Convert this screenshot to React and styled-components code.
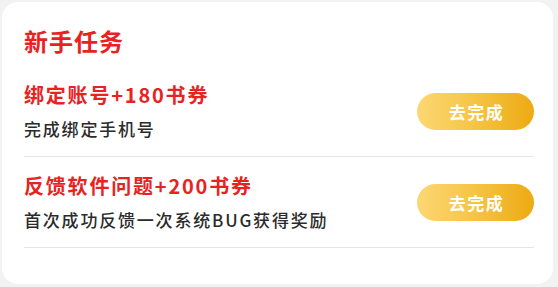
import React from 'react';
import styled, { createGlobalStyle } from 'styled-components';

const GlobalStyle = createGlobalStyle`
  html, body {
    margin: 0;
    padding: 0;
    background: #f2f2f2;
  }
  body {
    font-family: "Noto Sans CJK SC", "Noto Sans", sans-serif;
  }
`;

const Page = styled.div`
  padding: 2px 5px 3px 2px;
`;

const Card = styled.div`
  box-sizing: border-box;
  height: 282px;
  background: #ffffff;
  border-radius: 16px;
  padding: 21px 19px 0 22px;
`;

const Heading = styled.h2`
  margin: 0 0 7px;
  font-size: 24px;
  line-height: 36px;
  font-weight: 700;
  color: #e8231f;
  letter-spacing: 1px;
`;

const TaskRow = styled.div`
  height: 90px;
  display: flex;
  align-items: center;
  justify-content: space-between;
  border-bottom: 1px solid #e6e6e6;
`;

const TaskInfo = styled.div`
  display: flex;
  flex-direction: column;
  gap: 7px;
`;

const TaskTitle = styled.div`
  font-size: 20px;
  line-height: 28px;
  font-weight: 700;
  color: #e8231f;
  letter-spacing: 1.8px;
`;

const TaskDesc = styled.div`
  font-size: 17px;
  line-height: 26px;
  font-weight: 500;
  color: #2b2b2b;
  letter-spacing: 1.8px;
`;

const DoButton = styled.button`
  width: 117px;
  height: 37px;
  border: none;
  border-radius: 19px;
  background: linear-gradient(90deg, #fcd773 0%, #f5c444 50%, #edaa12 100%);
  color: #ffffff;
  font-family: inherit;
  font-size: 17px;
  font-weight: 700;
  letter-spacing: 1.5px;
  padding: 0 0 0 2px;
  cursor: pointer;
`;

const tasks = [
  { title: '绑定账号+180书券', desc: '完成绑定手机号' },
  { title: '反馈软件问题+200书券', desc: '首次成功反馈一次系统BUG获得奖励' },
];

export default function App() {
  return (
    <Page>
      <GlobalStyle />
      <Card>
        <Heading>新手任务</Heading>
        {tasks.map(task => (
          <TaskRow key={task.title}>
            <TaskInfo>
              <TaskTitle>{task.title}</TaskTitle>
              <TaskDesc>{task.desc}</TaskDesc>
            </TaskInfo>
            <DoButton>去完成</DoButton>
          </TaskRow>
        ))}
      </Card>
    </Page>
  );
}
